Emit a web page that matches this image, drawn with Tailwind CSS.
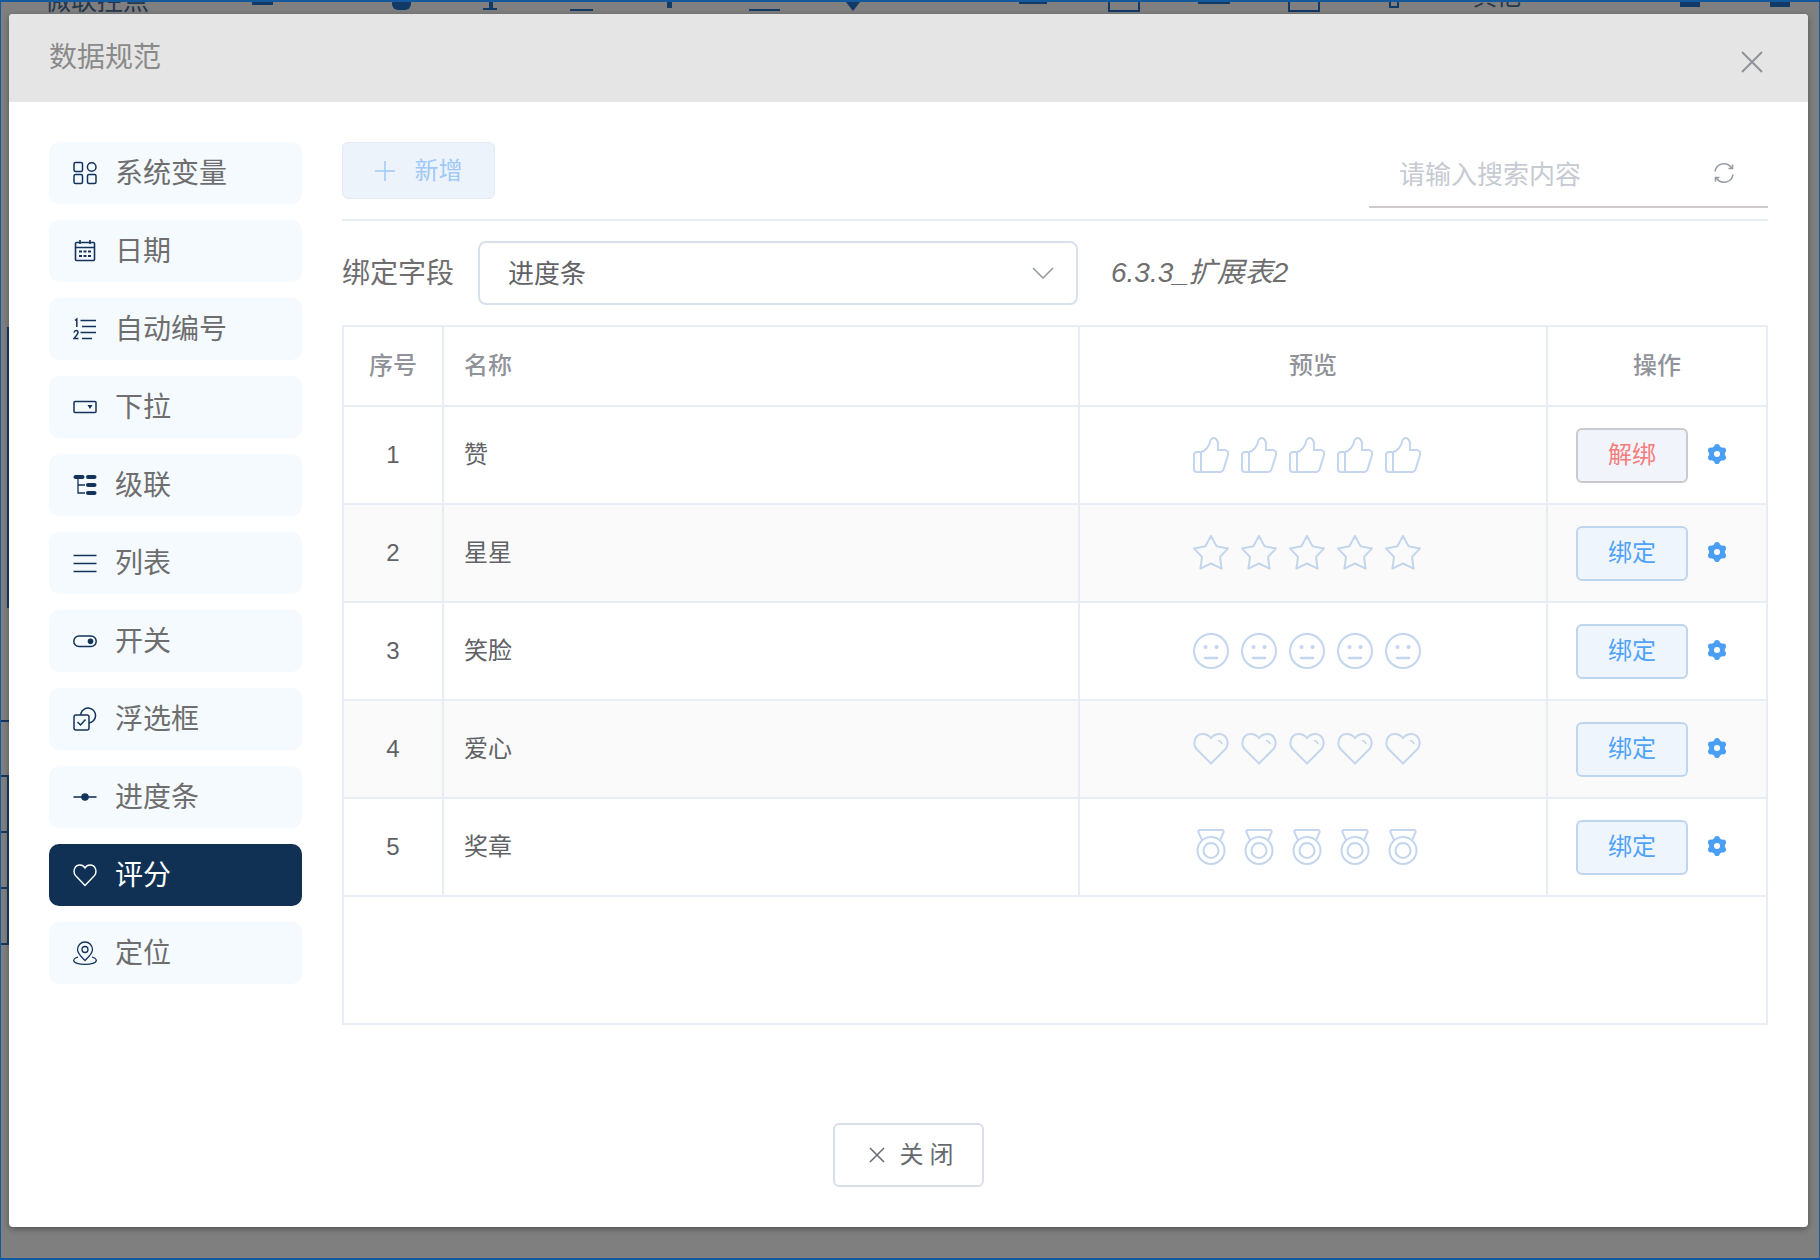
<!DOCTYPE html>
<html lang="zh">
<head>
    <meta charset="UTF-8">
    <title>数据规范</title>
    <script src="https://cdn.jsdelivr.net/npm/@tailwindcss/browser@4"></script>
</head>
<body class="font-['Liberation_Sans','Noto_Sans_CJK_SC',sans-serif]">

<div class="relative w-[1820px] h-[1260px] overflow-hidden bg-[#7f7f7f] border-t-2 border-l border-r border-b-2 border-[#14599c]">

    <!-- page behind the mask, only the edges show -->
    <div class="absolute left-[44px] top-[-16px] text-[26px] leading-[30px] text-[#25364d]">微联控点</div>
    <div class="absolute left-[1472px] top-[-20px] text-[24px] leading-[30px] text-[#25364d]">其他</div>
    <div class="absolute left-[251px] top-0 w-[21px] h-[3px] bg-[#123a66]"></div>
    <div class="absolute left-[391px] top-0 w-[19px] h-[8px] rounded-b-md bg-[#123a66]"></div>
    <div class="absolute left-[488px] top-0 w-[4px] h-[7px] bg-[#123a66]"></div>
    <div class="absolute left-[482px] top-[6px] w-[14px] h-[2px] bg-[#123a66]"></div>
    <div class="absolute left-[569px] top-[7px] w-[23px] h-[2px] bg-[#123a66]"></div>
    <div class="absolute left-[666px] top-0 w-[5px] h-[6px] bg-[#123a66]"></div>
    <div class="absolute left-[748px] top-[7px] w-[31px] h-[2px] bg-[#123a66]"></div>
    <div class="absolute left-[845px] top-0 w-[14px] h-[9px] bg-[#123a66] [clip-path:polygon(0_0,100%_0,50%_100%)]"></div>
    <div class="absolute left-[1018px] top-0 w-[28px] h-[2px] bg-[#123a66]"></div>
    <div class="absolute left-[1107px] top-[-4px] w-[32px] h-[14px] border-2 border-[#123a66]"></div>
    <div class="absolute left-[1197px] top-0 w-[32px] h-[2px] bg-[#123a66]"></div>
    <div class="absolute left-[1287px] top-[-4px] w-[32px] h-[14px] border-2 border-[#123a66]"></div>
    <div class="absolute left-[1388px] top-[-2px] w-[10px] h-[8px] border-2 border-[#123a66]"></div>
    <div class="absolute left-[1679px] top-0 w-[20px] h-[5px] bg-[#123a66]"></div>
    <div class="absolute left-[1769px] top-0 w-[20px] h-[5px] bg-[#123a66]"></div>
    <div class="absolute left-[6px] top-[325px] w-[2px] h-[281px] bg-[#123a66]"></div>
    <div class="absolute left-[6px] top-[775px] w-[2px] h-[166px] bg-[#123a66]"></div>
    <div class="absolute left-0 top-[718px] w-[8px] h-[2px] bg-[#123a66]"></div>
    <div class="absolute left-0 top-[773px] w-[8px] h-[2px] bg-[#123a66]"></div>
    <div class="absolute left-0 top-[829px] w-[8px] h-[2px] bg-[#123a66]"></div>
    <div class="absolute left-0 top-[885px] w-[8px] h-[2px] bg-[#123a66]"></div>
    <div class="absolute left-0 top-[941px] w-[8px] h-[2px] bg-[#123a66]"></div>

    <!-- dialog -->
    <div class="relative ml-[8px] mt-[12px] w-[1799px] h-[1213px] flex flex-col bg-white rounded-[4px] overflow-hidden shadow-[0_2px_6px_rgba(0,0,0,0.35)]">
        <div class="h-[88px] shrink-0 bg-[#e5e5e5] flex items-center justify-between pl-[40px] pr-[45px]">
            <span class="text-[28px] text-[#8a8a8a]">数据规范</span>
            <svg class="w-[22px] h-[22px] mt-[8px]" viewBox="0 0 22 22" fill="none" stroke="#8f9399" stroke-width="2"><path d="M1 1 21 21M21 1 1 21"/></svg>
        </div>

        <div class="flex-1 flex gap-[40px] pt-[40px] px-[40px]">
            <!-- left menu -->
            <div class="w-[253px] shrink-0 flex flex-col gap-[16px]">
                <div class="h-[62px] rounded-[10px] bg-[#f5faff] flex items-center gap-[18px] pl-[24px] text-[28px] text-[#6e6e6e]">
                    <svg class="w-[24px] h-[24px]" viewBox="0 0 24 24" fill="none" stroke="#13335a" stroke-width="1.500"><rect x="1" y="1.500" width="8.500" height="9" rx="1.500"/><circle cx="18.700" cy="6" r="4.300"/><rect x="1" y="13.500" width="8.500" height="9" rx="1.500"/><rect x="14.500" y="13.500" width="8.500" height="9" rx="1.500"/></svg>
                    <span class="mt-[2px]">系统变量</span>
                </div>
                <div class="h-[62px] rounded-[10px] bg-[#f5faff] flex items-center gap-[18px] pl-[24px] text-[28px] text-[#6e6e6e]">
                    <svg class="w-[24px] h-[24px]" viewBox="0 0 24 24" fill="none" stroke="#13335a" stroke-width="1.600"><rect x="2.500" y="3.500" width="19" height="18" rx="1"/><path d="M7 1v4M17 1v4M2.500 8.500h19"/><path stroke-width="2" d="M6 12.500h3M10.500 12.500h3M15 12.500h3M6 17h3M10.500 17h3M15 17h3"/></svg>
                    <span class="mt-[2px]">日期</span>
                </div>
                <div class="h-[62px] rounded-[10px] bg-[#f5faff] flex items-center gap-[18px] pl-[24px] text-[28px] text-[#6e6e6e]">
                    <svg class="w-[24px] h-[24px]" viewBox="0 0 24 24" fill="none" stroke="#13335a" stroke-width="1.500"><path d="M2 3.500 3.800 2V10M7.500 3.500H23M9 9.500H23M7.500 15.500H23M9 21.500H19"/><path d="M1 15.500Q1.500 13.500 3.200 13.500 5 13.500 5 15.500 5 17 1 21.500H5.500"/></svg>
                    <span class="mt-[2px]">自动编号</span>
                </div>
                <div class="h-[62px] rounded-[10px] bg-[#f5faff] flex items-center gap-[18px] pl-[24px] text-[28px] text-[#6e6e6e]">
                    <svg class="w-[24px] h-[24px]" viewBox="0 0 24 24" fill="none" stroke="#13335a" stroke-width="1.500"><rect x="1" y="6.500" width="22" height="11" rx="1"/><path fill="#13335a" stroke="none" d="M14.500 10h5l-2.500 4z"/></svg>
                    <span class="mt-[2px]">下拉</span>
                </div>
                <div class="h-[62px] rounded-[10px] bg-[#f5faff] flex items-center gap-[18px] pl-[24px] text-[28px] text-[#6e6e6e]">
                    <svg class="w-[24px] h-[24px]" viewBox="0 0 24 24" fill="#13335a" stroke="none"><rect x="0.500" y="2" width="11" height="4" rx="2"/><rect x="13" y="2" width="10.500" height="4" rx="2"/><rect x="13" y="10" width="10.500" height="4" rx="2"/><rect x="13" y="18" width="10.500" height="4" rx="2"/><path fill="none" stroke="#13335a" stroke-width="1.300" d="M5 5V20H12M5 12H12"/></svg>
                    <span class="mt-[2px]">级联</span>
                </div>
                <div class="h-[62px] rounded-[10px] bg-[#f5faff] flex items-center gap-[18px] pl-[24px] text-[28px] text-[#6e6e6e]">
                    <svg class="w-[24px] h-[24px]" viewBox="0 0 24 24" fill="none" stroke="#13335a" stroke-width="1.500"><path d="M0.500 4.500H23.500M0.500 12.500H23.500M0.500 20.500H23.500"/></svg>
                    <span class="mt-[2px]">列表</span>
                </div>
                <div class="h-[62px] rounded-[10px] bg-[#f5faff] flex items-center gap-[18px] pl-[24px] text-[28px] text-[#6e6e6e]">
                    <svg class="w-[24px] h-[24px]" viewBox="0 0 24 24" fill="none" stroke="#13335a" stroke-width="1.500"><rect x="0.800" y="7" width="22.400" height="10.500" rx="5.200"/><circle cx="17.500" cy="12.200" r="2.800" fill="#13335a" stroke="none"/></svg>
                    <span class="mt-[2px]">开关</span>
                </div>
                <div class="h-[62px] rounded-[10px] bg-[#f5faff] flex items-center gap-[18px] pl-[24px] text-[28px] text-[#6e6e6e]">
                    <svg class="w-[24px] h-[24px]" viewBox="0 0 24 24" fill="none" stroke="#13335a" stroke-width="1.500"><rect x="1" y="8" width="15" height="15" rx="2"/><path d="M8 8V6A7.500 7.500 0 1 1 16 16"/><path d="M4.500 15 7.500 18 12.500 12.500"/></svg>
                    <span class="mt-[2px]">浮选框</span>
                </div>
                <div class="h-[62px] rounded-[10px] bg-[#f5faff] flex items-center gap-[18px] pl-[24px] text-[28px] text-[#6e6e6e]">
                    <svg class="w-[24px] h-[24px]" viewBox="0 0 24 24" fill="#13335a" stroke="#13335a" stroke-width="1.600"><path d="M0.500 12H23.500"/><circle cx="12" cy="12" r="3.800" stroke="none"/></svg>
                    <span class="mt-[2px]">进度条</span>
                </div>
                <div class="h-[62px] rounded-[10px] bg-[#103054] flex items-center gap-[18px] pl-[24px] text-[28px] text-white">
                    <svg class="w-[24px] h-[24px]" viewBox="0 0 24 24" fill="none" stroke="#ffffff" stroke-width="1.400"><path d="M12 22.500 2.500 12.500C-0.500 8.500 1.500 2 7 2 9 2 11 3 12 5 13 3 15 2 17 2 22.500 2 24.500 8.500 21.500 12.500Z"/></svg>
                    <span class="mt-[2px]">评分</span>
                </div>
                <div class="h-[62px] rounded-[10px] bg-[#f5faff] flex items-center gap-[18px] pl-[24px] text-[28px] text-[#6e6e6e]">
                    <svg class="w-[24px] h-[24px]" viewBox="0 0 24 24" fill="none" stroke="#13335a" stroke-width="1.300"><path d="M12 19.500C8.500 16 4.500 12.500 4.500 8.500A7.500 7.500 0 0 1 19.500 8.500C19.500 12.500 15.500 16 12 19.500Z"/><circle cx="12" cy="8.500" r="3"/><path d="M5 16C2 17 0.700 18.300 0.700 19.500 0.700 21.800 6 23.300 12 23.300S23.300 21.800 23.300 19.500C23.300 18.300 22 17 19 16"/></svg>
                    <span class="mt-[2px]">定位</span>
                </div>
            </div>

            <!-- right side -->
            <div class="flex-1 flex flex-col">
                <div class="h-[79px] shrink-0 flex justify-between items-start border-b-2 border-[#e9edf4]">
                    <button class="w-[153px] h-[57px] rounded-[6px] bg-[#edf3fb] border border-[#e2eaf5] flex items-center justify-center gap-[20px] text-[24px] text-[#9fc9f7]">
                        <svg class="w-[20px] h-[20px]" viewBox="0 0 20 20" fill="none" stroke="#9fc9f7" stroke-width="1.500"><path d="M10 0V20M0 10H20"/></svg>
                        <span>新增</span>
                    </button>
                    <div class="w-[399px] h-[66px] border-b-2 border-[#cfcbcb] flex items-center pl-[30px] pr-[33px]">
                        <input class="flex-1 min-w-0 mt-[2px] text-[26px] outline-none placeholder:text-[#c6cad2]" placeholder="请输入搜索内容">
                        <svg class="w-[22px] h-[22px] shrink-0 -mt-[3px]" viewBox="0 0 22 22" fill="none" stroke="#979ca3" stroke-width="1.600"><path d="M2 9.500A9 9 0 0 1 18.500 6M20 12.500A9 9 0 0 1 3.500 16"/><path d="M19.500 2.500V6.500H15.500M2.500 19.500V15.500H6.500"/></svg>
                    </div>
                </div>

                <div class="mt-[20px] h-[64px] shrink-0 flex items-center">
                    <span class="w-[136px] mt-[2px] text-[28px] text-[#6e6e6e]">绑定字段</span>
                    <div class="w-[600px] h-[64px] rounded-[8px] border-2 border-[#d8e0ec] flex items-center justify-between pl-[28px] pr-[22px] text-[26px] text-[#606266]">
                        <span class="mt-[2px]">进度条</span>
                        <svg class="w-[22px] h-[12px]" viewBox="0 0 22 12" fill="none" stroke="#979ca3" stroke-width="1.600"><path d="M1 1 11 11 21 1"/></svg>
                    </div>
                    <span class="ml-[33px] text-[28px] italic text-[#6e6e6e]">6.3.3_扩展表2</span>
                </div>

                <div class="mt-[20px] h-[700px] shrink-0 border-2 border-[#e8edf5]">
                    <table class="w-full table-fixed border-collapse text-[24px] text-[#606266]">
                        <colgroup>
                            <col class="w-[99px]">
                            <col class="w-[636px]">
                            <col class="w-[468px]">
                            <col>
                        </colgroup>
                        <thead>
                            <tr class="h-[79px] text-[#909399]">
                                <th class="font-medium border-r-2 border-[#e8edf5]">序号</th>
                                <th class="font-medium text-left pl-[20px] border-r-2 border-[#e8edf5]">名称</th>
                                <th class="font-medium border-r-2 border-[#e8edf5]">预览</th>
                                <th class="font-medium">操作</th>
                            </tr>
                        </thead>
                        <tbody>
                            <tr class="h-[98px] border-t-2 border-[#e8edf5]">
                                <td class="text-center border-r-2 border-[#e8edf5]">1</td>
                                <td class="pl-[20px] border-r-2 border-[#e8edf5]">赞</td>
                                <td class="border-r-2 border-[#e8edf5]">
                                    <div class="flex justify-center gap-[12px] pr-[12px]">
                                        <svg class="w-[36px] h-[36px]" viewBox="0 0 36 36" fill="none" stroke="#c3d6ee" stroke-width="2"><path d="M8 15C12 14 16 10 17 5 17.500 1 21 0 23 2 25 4 25 5 25 13H31Q36 13 35 18L31 31Q30 35 27 35H8Z"/><path d="M8 15H4Q1 15 1 18V32Q1 35 4 35H8Z"/></svg>
                                        <svg class="w-[36px] h-[36px]" viewBox="0 0 36 36" fill="none" stroke="#c3d6ee" stroke-width="2"><path d="M8 15C12 14 16 10 17 5 17.500 1 21 0 23 2 25 4 25 5 25 13H31Q36 13 35 18L31 31Q30 35 27 35H8Z"/><path d="M8 15H4Q1 15 1 18V32Q1 35 4 35H8Z"/></svg>
                                        <svg class="w-[36px] h-[36px]" viewBox="0 0 36 36" fill="none" stroke="#c3d6ee" stroke-width="2"><path d="M8 15C12 14 16 10 17 5 17.500 1 21 0 23 2 25 4 25 5 25 13H31Q36 13 35 18L31 31Q30 35 27 35H8Z"/><path d="M8 15H4Q1 15 1 18V32Q1 35 4 35H8Z"/></svg>
                                        <svg class="w-[36px] h-[36px]" viewBox="0 0 36 36" fill="none" stroke="#c3d6ee" stroke-width="2"><path d="M8 15C12 14 16 10 17 5 17.500 1 21 0 23 2 25 4 25 5 25 13H31Q36 13 35 18L31 31Q30 35 27 35H8Z"/><path d="M8 15H4Q1 15 1 18V32Q1 35 4 35H8Z"/></svg>
                                        <svg class="w-[36px] h-[36px]" viewBox="0 0 36 36" fill="none" stroke="#c3d6ee" stroke-width="2"><path d="M8 15C12 14 16 10 17 5 17.500 1 21 0 23 2 25 4 25 5 25 13H31Q36 13 35 18L31 31Q30 35 27 35H8Z"/><path d="M8 15H4Q1 15 1 18V32Q1 35 4 35H8Z"/></svg>
                                    </div>
                                </td>
                                <td>
                                    <div class="flex items-center gap-[19px] pl-[28px]">
                                        <button class="w-[112px] h-[55px] rounded-[6px] border-2 border-[#c9c9ce] bg-[#f1f5fb] text-[#f67c7c]">解绑</button>
                                        <svg class="w-[20px] h-[20px] -mt-[2px]" viewBox="0 0 20 20" fill="#4a9ff5"><circle cx="10" cy="2.800" r="2.800"/><circle cx="16.200" cy="6.400" r="2.800"/><circle cx="16.200" cy="13.600" r="2.800"/><circle cx="10" cy="17.200" r="2.800"/><circle cx="3.800" cy="13.600" r="2.800"/><circle cx="3.800" cy="6.400" r="2.800"/><circle cx="10" cy="10" r="5.500" fill="none" stroke="#4a9ff5" stroke-width="5"/></svg>
                                    </div>
                                </td>
                            </tr>
                            <tr class="h-[98px] bg-[#fafafa] border-t-2 border-[#e8edf5]">
                                <td class="text-center border-r-2 border-[#e8edf5]">2</td>
                                <td class="pl-[20px] border-r-2 border-[#e8edf5]">星星</td>
                                <td class="border-r-2 border-[#e8edf5]">
                                    <div class="flex justify-center gap-[12px] pr-[12px]">
                                        <svg class="w-[36px] h-[36px]" viewBox="0 0 36 36" fill="none" stroke="#c3d6ee" stroke-width="2" stroke-linejoin="round"><path d="M18 1 23.600 11.300 35.100 13.400 27 21.900 28.600 33.600 18 28.500 7.400 33.600 9 21.900 0.900 13.400 12.400 11.300Z"/></svg>
                                        <svg class="w-[36px] h-[36px]" viewBox="0 0 36 36" fill="none" stroke="#c3d6ee" stroke-width="2" stroke-linejoin="round"><path d="M18 1 23.600 11.300 35.100 13.400 27 21.900 28.600 33.600 18 28.500 7.400 33.600 9 21.900 0.900 13.400 12.400 11.300Z"/></svg>
                                        <svg class="w-[36px] h-[36px]" viewBox="0 0 36 36" fill="none" stroke="#c3d6ee" stroke-width="2" stroke-linejoin="round"><path d="M18 1 23.600 11.300 35.100 13.400 27 21.900 28.600 33.600 18 28.500 7.400 33.600 9 21.900 0.900 13.400 12.400 11.300Z"/></svg>
                                        <svg class="w-[36px] h-[36px]" viewBox="0 0 36 36" fill="none" stroke="#c3d6ee" stroke-width="2" stroke-linejoin="round"><path d="M18 1 23.600 11.300 35.100 13.400 27 21.900 28.600 33.600 18 28.500 7.400 33.600 9 21.900 0.900 13.400 12.400 11.300Z"/></svg>
                                        <svg class="w-[36px] h-[36px]" viewBox="0 0 36 36" fill="none" stroke="#c3d6ee" stroke-width="2" stroke-linejoin="round"><path d="M18 1 23.600 11.300 35.100 13.400 27 21.900 28.600 33.600 18 28.500 7.400 33.600 9 21.900 0.900 13.400 12.400 11.300Z"/></svg>
                                    </div>
                                </td>
                                <td>
                                    <div class="flex items-center gap-[19px] pl-[28px]">
                                        <button class="w-[112px] h-[55px] rounded-[6px] border-2 border-[#bfd5ee] bg-[#eff5fd] text-[#4ea2f8]">绑定</button>
                                        <svg class="w-[20px] h-[20px] -mt-[2px]" viewBox="0 0 20 20" fill="#4a9ff5"><circle cx="10" cy="2.800" r="2.800"/><circle cx="16.200" cy="6.400" r="2.800"/><circle cx="16.200" cy="13.600" r="2.800"/><circle cx="10" cy="17.200" r="2.800"/><circle cx="3.800" cy="13.600" r="2.800"/><circle cx="3.800" cy="6.400" r="2.800"/><circle cx="10" cy="10" r="5.500" fill="none" stroke="#4a9ff5" stroke-width="5"/></svg>
                                    </div>
                                </td>
                            </tr>
                            <tr class="h-[98px] border-t-2 border-[#e8edf5]">
                                <td class="text-center border-r-2 border-[#e8edf5]">3</td>
                                <td class="pl-[20px] border-r-2 border-[#e8edf5]">笑脸</td>
                                <td class="border-r-2 border-[#e8edf5]">
                                    <div class="flex justify-center gap-[12px] pr-[12px]">
                                        <svg class="w-[36px] h-[36px]" viewBox="0 0 36 36" fill="none" stroke="#c3d6ee" stroke-width="2"><circle cx="18" cy="18" r="17"/><circle cx="12.500" cy="14" r="2" fill="#c3d6ee" stroke="none"/><circle cx="23.500" cy="14" r="2" fill="#c3d6ee" stroke="none"/><path stroke-width="2.400" stroke-linecap="round" d="M12 25H24"/></svg>
                                        <svg class="w-[36px] h-[36px]" viewBox="0 0 36 36" fill="none" stroke="#c3d6ee" stroke-width="2"><circle cx="18" cy="18" r="17"/><circle cx="12.500" cy="14" r="2" fill="#c3d6ee" stroke="none"/><circle cx="23.500" cy="14" r="2" fill="#c3d6ee" stroke="none"/><path stroke-width="2.400" stroke-linecap="round" d="M12 25H24"/></svg>
                                        <svg class="w-[36px] h-[36px]" viewBox="0 0 36 36" fill="none" stroke="#c3d6ee" stroke-width="2"><circle cx="18" cy="18" r="17"/><circle cx="12.500" cy="14" r="2" fill="#c3d6ee" stroke="none"/><circle cx="23.500" cy="14" r="2" fill="#c3d6ee" stroke="none"/><path stroke-width="2.400" stroke-linecap="round" d="M12 25H24"/></svg>
                                        <svg class="w-[36px] h-[36px]" viewBox="0 0 36 36" fill="none" stroke="#c3d6ee" stroke-width="2"><circle cx="18" cy="18" r="17"/><circle cx="12.500" cy="14" r="2" fill="#c3d6ee" stroke="none"/><circle cx="23.500" cy="14" r="2" fill="#c3d6ee" stroke="none"/><path stroke-width="2.400" stroke-linecap="round" d="M12 25H24"/></svg>
                                        <svg class="w-[36px] h-[36px]" viewBox="0 0 36 36" fill="none" stroke="#c3d6ee" stroke-width="2"><circle cx="18" cy="18" r="17"/><circle cx="12.500" cy="14" r="2" fill="#c3d6ee" stroke="none"/><circle cx="23.500" cy="14" r="2" fill="#c3d6ee" stroke="none"/><path stroke-width="2.400" stroke-linecap="round" d="M12 25H24"/></svg>
                                    </div>
                                </td>
                                <td>
                                    <div class="flex items-center gap-[19px] pl-[28px]">
                                        <button class="w-[112px] h-[55px] rounded-[6px] border-2 border-[#bfd5ee] bg-[#eff5fd] text-[#4ea2f8]">绑定</button>
                                        <svg class="w-[20px] h-[20px] -mt-[2px]" viewBox="0 0 20 20" fill="#4a9ff5"><circle cx="10" cy="2.800" r="2.800"/><circle cx="16.200" cy="6.400" r="2.800"/><circle cx="16.200" cy="13.600" r="2.800"/><circle cx="10" cy="17.200" r="2.800"/><circle cx="3.800" cy="13.600" r="2.800"/><circle cx="3.800" cy="6.400" r="2.800"/><circle cx="10" cy="10" r="5.500" fill="none" stroke="#4a9ff5" stroke-width="5"/></svg>
                                    </div>
                                </td>
                            </tr>
                            <tr class="h-[98px] bg-[#fafafa] border-t-2 border-[#e8edf5]">
                                <td class="text-center border-r-2 border-[#e8edf5]">4</td>
                                <td class="pl-[20px] border-r-2 border-[#e8edf5]">爱心</td>
                                <td class="border-r-2 border-[#e8edf5]">
                                    <div class="flex justify-center gap-[12px] pr-[12px]">
                                        <svg class="w-[36px] h-[36px]" viewBox="0 0 36 36" fill="none" stroke="#c3d6ee" stroke-width="2"><path d="M18 32.500 3.500 18C-0.500 13.500 1.500 3 9.500 3 13 3 16 4.500 18 7 20 4.500 23 3 26.500 3 34.500 3 36.500 13.500 32.500 18Z"/><path stroke-width="1.500" d="M25 9.500Q28 10 29 13"/></svg>
                                        <svg class="w-[36px] h-[36px]" viewBox="0 0 36 36" fill="none" stroke="#c3d6ee" stroke-width="2"><path d="M18 32.500 3.500 18C-0.500 13.500 1.500 3 9.500 3 13 3 16 4.500 18 7 20 4.500 23 3 26.500 3 34.500 3 36.500 13.500 32.500 18Z"/><path stroke-width="1.500" d="M25 9.500Q28 10 29 13"/></svg>
                                        <svg class="w-[36px] h-[36px]" viewBox="0 0 36 36" fill="none" stroke="#c3d6ee" stroke-width="2"><path d="M18 32.500 3.500 18C-0.500 13.500 1.500 3 9.500 3 13 3 16 4.500 18 7 20 4.500 23 3 26.500 3 34.500 3 36.500 13.500 32.500 18Z"/><path stroke-width="1.500" d="M25 9.500Q28 10 29 13"/></svg>
                                        <svg class="w-[36px] h-[36px]" viewBox="0 0 36 36" fill="none" stroke="#c3d6ee" stroke-width="2"><path d="M18 32.500 3.500 18C-0.500 13.500 1.500 3 9.500 3 13 3 16 4.500 18 7 20 4.500 23 3 26.500 3 34.500 3 36.500 13.500 32.500 18Z"/><path stroke-width="1.500" d="M25 9.500Q28 10 29 13"/></svg>
                                        <svg class="w-[36px] h-[36px]" viewBox="0 0 36 36" fill="none" stroke="#c3d6ee" stroke-width="2"><path d="M18 32.500 3.500 18C-0.500 13.500 1.500 3 9.500 3 13 3 16 4.500 18 7 20 4.500 23 3 26.500 3 34.500 3 36.500 13.500 32.500 18Z"/><path stroke-width="1.500" d="M25 9.500Q28 10 29 13"/></svg>
                                    </div>
                                </td>
                                <td>
                                    <div class="flex items-center gap-[19px] pl-[28px]">
                                        <button class="w-[112px] h-[55px] rounded-[6px] border-2 border-[#bfd5ee] bg-[#eff5fd] text-[#4ea2f8]">绑定</button>
                                        <svg class="w-[20px] h-[20px] -mt-[2px]" viewBox="0 0 20 20" fill="#4a9ff5"><circle cx="10" cy="2.800" r="2.800"/><circle cx="16.200" cy="6.400" r="2.800"/><circle cx="16.200" cy="13.600" r="2.800"/><circle cx="10" cy="17.200" r="2.800"/><circle cx="3.800" cy="13.600" r="2.800"/><circle cx="3.800" cy="6.400" r="2.800"/><circle cx="10" cy="10" r="5.500" fill="none" stroke="#4a9ff5" stroke-width="5"/></svg>
                                    </div>
                                </td>
                            </tr>
                            <tr class="h-[98px] border-y-2 border-[#e8edf5]">
                                <td class="text-center border-r-2 border-[#e8edf5]">5</td>
                                <td class="pl-[20px] border-r-2 border-[#e8edf5]">奖章</td>
                                <td class="border-r-2 border-[#e8edf5]">
                                    <div class="flex justify-center gap-[12px] pr-[12px]">
                                        <svg class="w-[36px] h-[36px]" viewBox="0 0 36 36" fill="none" stroke="#c3d6ee" stroke-width="2"><path d="M9 11 5.500 3.500Q5 1 7 1H29Q31 1 30.500 3.500L27 11"/><circle cx="18" cy="21.500" r="13.500"/><circle cx="18" cy="21.500" r="7.500"/></svg>
                                        <svg class="w-[36px] h-[36px]" viewBox="0 0 36 36" fill="none" stroke="#c3d6ee" stroke-width="2"><path d="M9 11 5.500 3.500Q5 1 7 1H29Q31 1 30.500 3.500L27 11"/><circle cx="18" cy="21.500" r="13.500"/><circle cx="18" cy="21.500" r="7.500"/></svg>
                                        <svg class="w-[36px] h-[36px]" viewBox="0 0 36 36" fill="none" stroke="#c3d6ee" stroke-width="2"><path d="M9 11 5.500 3.500Q5 1 7 1H29Q31 1 30.500 3.500L27 11"/><circle cx="18" cy="21.500" r="13.500"/><circle cx="18" cy="21.500" r="7.500"/></svg>
                                        <svg class="w-[36px] h-[36px]" viewBox="0 0 36 36" fill="none" stroke="#c3d6ee" stroke-width="2"><path d="M9 11 5.500 3.500Q5 1 7 1H29Q31 1 30.500 3.500L27 11"/><circle cx="18" cy="21.500" r="13.500"/><circle cx="18" cy="21.500" r="7.500"/></svg>
                                        <svg class="w-[36px] h-[36px]" viewBox="0 0 36 36" fill="none" stroke="#c3d6ee" stroke-width="2"><path d="M9 11 5.500 3.500Q5 1 7 1H29Q31 1 30.500 3.500L27 11"/><circle cx="18" cy="21.500" r="13.500"/><circle cx="18" cy="21.500" r="7.500"/></svg>
                                    </div>
                                </td>
                                <td>
                                    <div class="flex items-center gap-[19px] pl-[28px]">
                                        <button class="w-[112px] h-[55px] rounded-[6px] border-2 border-[#bfd5ee] bg-[#eff5fd] text-[#4ea2f8]">绑定</button>
                                        <svg class="w-[20px] h-[20px] -mt-[2px]" viewBox="0 0 20 20" fill="#4a9ff5"><circle cx="10" cy="2.800" r="2.800"/><circle cx="16.200" cy="6.400" r="2.800"/><circle cx="16.200" cy="13.600" r="2.800"/><circle cx="10" cy="17.200" r="2.800"/><circle cx="3.800" cy="13.600" r="2.800"/><circle cx="3.800" cy="6.400" r="2.800"/><circle cx="10" cy="10" r="5.500" fill="none" stroke="#4a9ff5" stroke-width="5"/></svg>
                                    </div>
                                </td>
                            </tr>
                        </tbody>
                    </table>
                </div>
            </div>
        </div>

        <div class="shrink-0 flex justify-center pb-[40px]">
            <button class="w-[151px] h-[64px] pl-[5px] rounded-[6px] border-2 border-[#d8dfe9] bg-white flex items-center justify-center gap-[15px] text-[24px] text-[#666a70]">
                <svg class="w-[16px] h-[16px]" viewBox="0 0 16 16" fill="none" stroke="#666a70" stroke-width="1.500"><path d="M1 1 15 15M15 1 1 15"/></svg>
                <span class="tracking-[6px] -mr-[6px]">关闭</span>
            </button>
        </div>
    </div>
</div>

</body>
</html>
